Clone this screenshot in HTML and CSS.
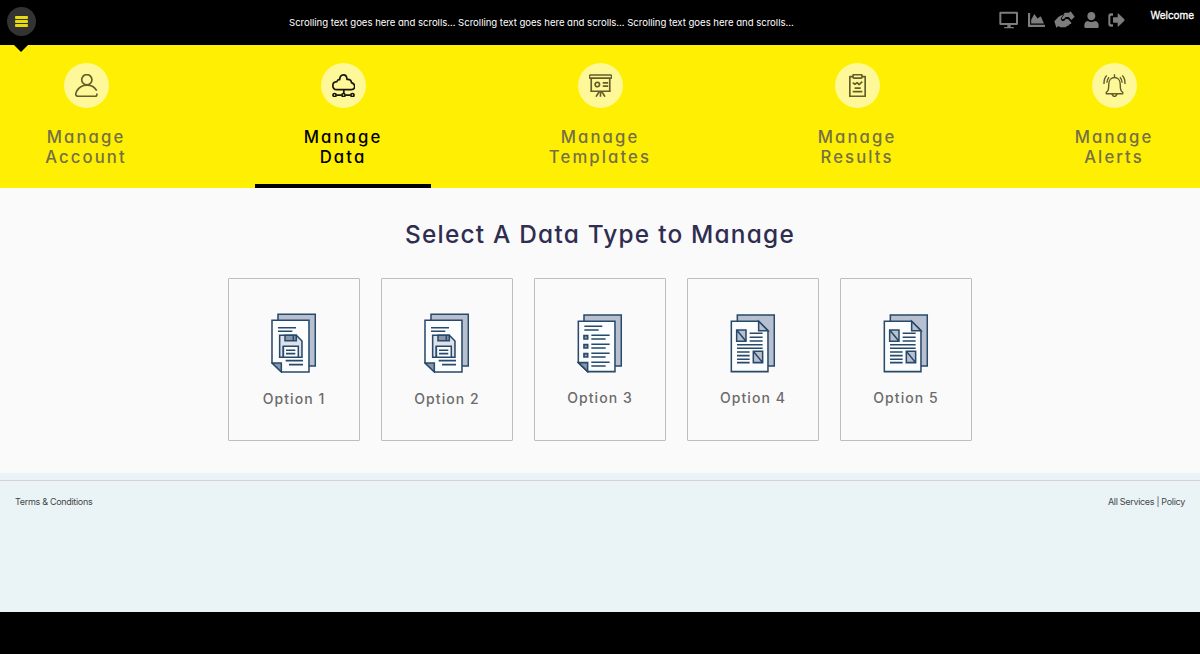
FILE: index.html
```html
<!DOCTYPE html>
<html lang="en">
<head>
<meta charset="utf-8">
<title>Manage Data</title>
<link rel="stylesheet" href="styles.css">
</head>
<body>
<svg class="defs" width="0" height="0">
  <symbol id="doc-disk" viewBox="0 0 136 181">
    <g class="doc">
      <path class="shade" d="M21 4h112v155H21z"/>
      <path class="paper" d="M3 22h111v155H32L3 150z"/>
      <path class="fold" d="M3 150h28v27z"/>
      <path d="M21 44h54M21 55h43M44 143h52M54 155h42"/>
      <path class="light" d="M26 67h50l17 17v49H26z"/>
      <path class="fold" d="M42 67h34v16H42zM67 67v16"/>
      <path class="paper" d="M37 100h45v33H37z"/>
      <path d="M45 112h28M45 122h28M37 100v33"/>
    </g>
  </symbol>
  <symbol id="doc-list" viewBox="0 0 136 181">
    <g class="doc">
      <path class="shade" d="M21 6h112v153H21z"/>
      <path class="paper" d="M4 25h110v151H32L4 149z"/>
      <path class="fold" d="M4 149h28v27z"/>
      <path d="M22 40h54M22 51h43M43 67h55M43 78h43M43 94h55M43 105h43M43 121h55M43 132h43M43 148h55M43 159h43"/>
      <path class="box" d="M21 68h11v10H21zM21 95h11v10H21zM21 122h11v10H21z"/>
    </g>
  </symbol>
  <symbol id="doc-news" viewBox="0 0 136 181">
    <g class="doc">
      <path class="shade" d="M22 6h111v153H22z"/>
      <path class="paper" d="M4 25h82l28 28v123H4z"/>
      <path class="shade" d="M86 25v28h28z"/>
      <path class="shade" d="M20 51h28v34H20zM70 115h28v34H70zM20 51l28 34M70 115l28 34"/>
      <path d="M59 61h39M59 73h39M59 84h39M21 95h77M21 106h77M21 117h38M21 128h38M21 139h38M21 149h38"/>
    </g>
  </symbol>
</svg>

<header class="topbar">
  <div class="menu">
    <button class="menu-button" aria-label="Menu"><i></i><i></i><i></i></button>
    <span class="menu-arrow"></span>
  </div>
  <p class="ticker">Scrolling text goes here and scrolls... Scrolling text goes here and scrolls... Scrolling text goes here and scrolls...</p>
  <div class="tools">
    <svg width="20" height="18" viewBox="0 0 60 54"><path fill-rule="evenodd" d="M5 2h48q4 0 4 4v32q0 4-4 4H35v6h7q3 0 3 4H15q0-4 3-4h7v-6H5q-4 0-4-4V6q0-4 4-4zM7 8v28h44V8z"/></svg>
    <svg width="17" height="14" viewBox="0 64 512 384" preserveAspectRatio="none"><path d="M500 384c7 0 12 5 12 12v40c0 7-5 12-12 12H12c-7 0-12-5-12-12V76c0-7 5-12 12-12h40c7 0 12 5 12 12v308zM372 160l-84 56-87-114c-5-7-16-6-20 1L96 248v104h384L391 165c-3-7-12-9-19-5z"/></svg>
    <svg class="hands" width="21" height="17" viewBox="0 0 63 51"><path d="M1 31 14 17q6-5 14-5l-6 9q-2 7 4 9 6 1 9-6h7l9 10q3 4-1 5l-4 1q0 4-4 4l-3 1-4 4H19l-5-4-7 5z"/><path d="M62 17 50 1l-5 4H32L24 17q-2 6 2 8 5 1 9-7h9l8 9z"/><path class="cut" d="M30 11 22 21q-2 6 4 8 5 0 8-8h9l9 10"/></svg>
    <svg width="15" height="16" viewBox="0 0 45 48"><path d="M22 0c7 0 12 5 12 12s-5 13-12 13-12-6-12-13S15 0 22 0zM11 27q11 6 22 0 11 2 11 13v4q0 4-4 4H5q-4 0-4-4v-4q0-11 10-13z"/></svg>
    <svg width="17" height="14" viewBox="0 0 51 42"><path d="M15 1v7h-5q-3 0-3 3v20q0 3 3 3h5v7H9q-8 0-8-8V9q0-8 8-8zM29 3q0-3 3-1l17 17q2 2 0 4L32 40q-3 2-3-1V29H17q-2 0-2-2V15q0-2 2-2h12z"/></svg>
  </div>
  <span class="welcome">Welcome</span>
</header>

<nav class="nav">
  <a class="nav-item">
    <span class="disc"><svg viewBox="0 0 72 72"><circle cx="37" cy="18" r="16"/><path d="M68 52C56 30 20 27 5 54q-7 16 5 16h54q5 0 5-9"/></svg></span>
    <span>Manage<br>Account</span>
  </a>
  <a class="nav-item active">
    <span class="disc"><svg viewBox="0 0 72 72"><path d="M15 49C-1 48-2 25 15 24q3-8 9-6C25-2 46-2 47 17q13-1 14 10c15 5 12 22 0 22zM37 49v11M14 66h16M42 66h16"/><circle cx="8" cy="66" r="5"/><circle cx="36" cy="66" r="5"/><circle cx="64" cy="66" r="5"/></svg></span>
    <span>Manage<br>Data</span>
  </a>
  <a class="nav-item">
    <span class="disc"><svg viewBox="0 0 72 72"><rect x="1" y="3" width="70" height="10" rx="4"/><path d="M7 13v41h58V13M4 54h64M36 54v17M32 55 22 71M40 55l10 16M43 28h17M43 38h17"/><circle cx="26" cy="33" r="7"/></svg></span>
    <span>Manage<br>Templates</span>
  </a>
  <a class="nav-item">
    <span class="disc"><svg viewBox="0 0 72 72"><path d="M22 8H12v62h48V8H50"/><rect x="22" y="2" width="28" height="11" rx="3"/><path d="m21 27 7 5 7-5 6 6 10-9M27 44h19M21 55h30"/></svg></span>
    <span>Manage<br>Results</span>
  </a>
  <a class="nav-item">
    <span class="disc"><svg class="bell" viewBox="0 0 72 72"><path d="M36 1v8M11 62h50q3-4-3-8-4-4-4-22c0-28-36-28-36 0q0 18-4 22-6 4-3 8zM28 63q8 15 16 0M12 5Q3 13 3 31M19 10q-7 7-7 17M60 5q9 8 9 26M53 10q7 7 7 17"/></svg></span>
    <span>Manage<br>Alerts</span>
  </a>
</nav>

<main class="content">
  <h1 class="title">Select A Data Type to Manage</h1>
  <div class="cards">
    <a class="card"><svg><use href="#doc-disk"/></svg><span class="lower">Option 1</span></a>
    <a class="card"><svg><use href="#doc-disk"/></svg><span class="lower">Option 2</span></a>
    <a class="card"><svg><use href="#doc-list"/></svg><span>Option 3</span></a>
    <a class="card"><svg><use href="#doc-news"/></svg><span>Option 4</span></a>
    <a class="card"><svg><use href="#doc-news"/></svg><span>Option 5</span></a>
  </div>
</main>

<footer class="footer">
  <div class="footer-row">
    <span>Terms &amp; Conditions</span>
    <span>All Services | Policy</span>
  </div>
</footer>
</body>
</html>
```

FILE: styles.css
```css
* { box-sizing: border-box; }
body {
  margin: 0;
  height: 654px;
  overflow: hidden;
  background: #000;
  font-family: Inter, "Liberation Sans", sans-serif;
  font-feature-settings: "cv11";
}
.defs { position: absolute; }

.topbar {
  display: grid;
  grid-template-columns: 289px 1fr auto 75px;
  height: 45px;
  background: #000;
  color: #fff;
}
.menu { position: relative; padding: 7px 0 0 7px; }
.menu-button {
  display: flex;
  flex-direction: column;
  align-items: center;
  justify-content: center;
  gap: 1px;
  width: 29px;
  height: 29px;
  padding: 0;
  border: 0;
  border-radius: 50%;
  background: #333;
}
.menu-button i { width: 13px; height: 3px; border-radius: 1px; background: #e6d90c; }
.menu-arrow {
  position: absolute;
  left: 14px;
  top: 45px;
  border: 7px solid transparent;
  border-top-color: #000;
  border-bottom: 0;
}
.ticker {
  margin: 17px 0 0;
  font-size: 9.6px;
  line-height: 12px;
  letter-spacing: -0.03px;
  white-space: nowrap;
}
.tools { display: flex; align-items: center; gap: 9px; height: 39px; fill: #7d7d7d; }
.tools .cut { fill: none; stroke: #000; stroke-width: 2; }
.welcome {
  justify-self: end;
  padding: 9px 6px 0 0;
  font-size: 10px;
  line-height: 12px;
  letter-spacing: -0.05px;
  -webkit-text-stroke: 0.3px #fff;
}

.nav {
  display: flex;
  justify-content: space-between;
  height: 143px;
  background: #ffef02;
}
.nav-item {
  display: flex;
  flex-direction: column;
  align-items: center;
  gap: 19px;
  width: 172px;
  padding-top: 18px;
  color: #747046;
  font-size: 16.7px;
  font-weight: 550;
  line-height: 20px;
  letter-spacing: 2.1px;
  text-align: center;
}
.nav-item.active {
  width: 176px;
  margin: 0 -2px;
  border-bottom: 4px solid #000;
  color: #000;
}
.disc {
  display: flex;
  align-items: center;
  justify-content: center;
  width: 45px;
  height: 45px;
  border-radius: 50%;
  background: #fff899;
}
.disc svg {
  width: 23px;
  height: 23px;
  fill: none;
  stroke: #625d2a;
  stroke-width: 5.2;
  stroke-linejoin: round;
}
.disc .bell { stroke-width: 4.4; }
.active .disc svg { stroke: #17160b; }

.content { height: 285px; padding-top: 30px; background: #fafafa; }
.title {
  margin: 0 0 28px;
  color: #2f2d50;
  font-size: 24.4px;
  font-weight: 500;
  line-height: 32px;
  letter-spacing: 1.22px;
  text-align: center;
}
.cards { display: flex; justify-content: center; gap: 21px; }
.card {
  display: flex;
  flex-direction: column;
  align-items: center;
  gap: 15.5px;
  width: 132px;
  height: 163px;
  padding-top: 33.5px;
  border: 1px solid #bdbdbd;
  border-radius: 1px;
  color: #6c6a6c;
  font-size: 14px;
  font-weight: 450;
  line-height: 20px;
  letter-spacing: 1.05px;
}
.card svg { width: 45.3px; height: 60.3px; flex: none; }
.lower { padding-top: 1px; }
.doc { fill: none; stroke: #27496a; stroke-width: 4.6; }
.paper { fill: #fcfdfe; }
.shade { fill: #b8bfcf; }
.light { fill: #dfe1e9; }
.fold { fill: #8895aa; }
.box { fill: #9aa7b8; stroke-width: 5; }

.footer { height: 139px; padding-top: 7px; background: #eaf4f7; color: #454545; }
.footer-row {
  display: flex;
  justify-content: space-between;
  padding: 15px 15px 0;
  border-top: 1px solid #d4d4d4;
  font-size: 9px;
  line-height: 12px;
  letter-spacing: -0.31px;
}
```
